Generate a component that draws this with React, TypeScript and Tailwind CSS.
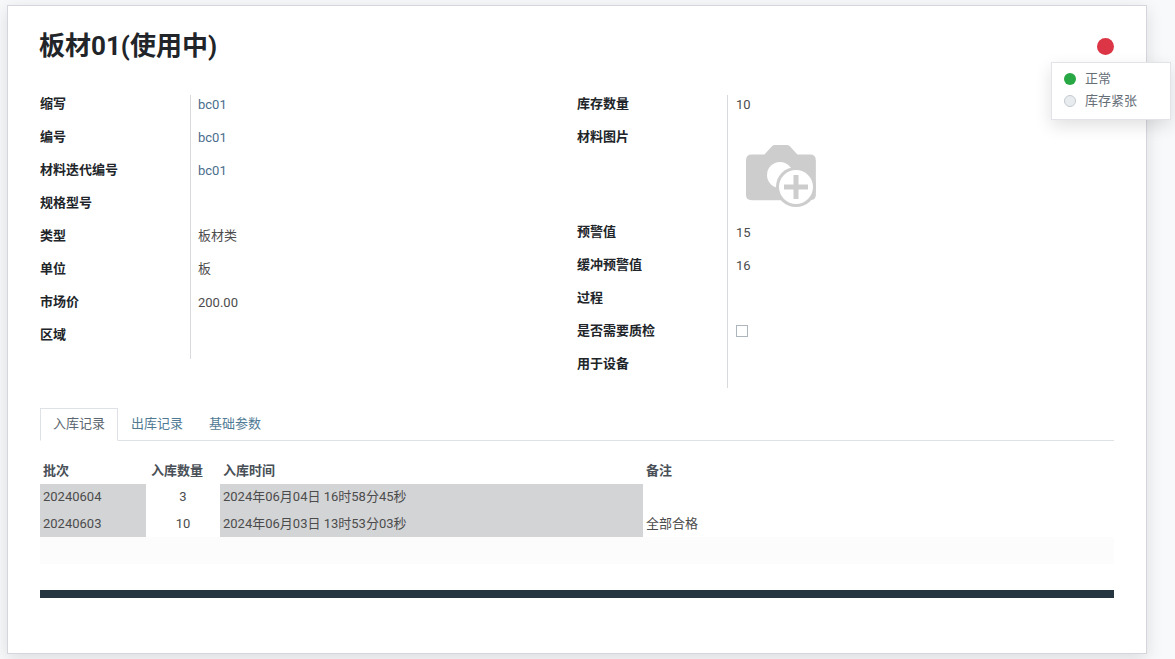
import React from 'react';

const font = { fontFamily: 'Roboto, "Noto Sans CJK SC", sans-serif' };

const leftRows = [
  { label: '缩写', value: 'bc01', cls: 'text-[#4a6d8c]' },
  { label: '编号', value: 'bc01', cls: 'text-[#4a6d8c]' },
  { label: '材料迭代编号', value: 'bc01', cls: 'text-[#4a6d8c]' },
  { label: '规格型号', value: '', cls: '' },
  { label: '类型', value: '板材类', cls: 'block -mt-px' },
  { label: '单位', value: '板', cls: 'block -mt-px' },
  { label: '市场价', value: '200.00', cls: '' },
  { label: '区域', value: '', cls: '' },
];

const records = [
  { batch: '20240604', qty: '3', time: '2024年06月04日 16时58分45秒', note: '', rowCls: 'h-[26px]' },
  { batch: '20240603', qty: '10', time: '2024年06月03日 13时53分03秒', note: '全部合格', rowCls: 'h-[27px]' },
];

const Row: React.FC<{ label: string; children?: React.ReactNode; className?: string; valueClass?: string }> = ({
  label,
  children,
  className,
  valueClass,
}) => (
  <div className={`flex ${className ?? 'h-[33px]'}`}>
    <div className="w-[150px] shrink-0 font-bold leading-[18px] text-[#212529]">{label}</div>
    <div className={`flex-1 border-l border-[#d8dadd] pt-[1px] leading-[18px] text-[#4c4c4c] ${valueClass ?? 'pl-2'}`}>{children}</div>
  </div>
);

const CameraIcon = () => (
  <svg width="72" height="64" viewBox="0 0 72 64">
    <path
      d="M6 13h13l8-9q1-1 3-1h12q2 0 3 1l8 9h13q6 0 6 6v36q0 5-6 5H6q-6 0-6-5V19q0-6 6-6z"
      fill="#cdcdcd"
      transform="translate(1 -1) scale(0.97)"
    />
    <circle cx="35" cy="32" r="13" fill="#fff" />
    <circle cx="51" cy="44" r="20" fill="#cdcdcd" />
    <circle cx="51" cy="44" r="17" fill="#fff" />
    <path d="M48.5 32h5v9.5H63v5h-9.5V56h-5v-9.5H39v-5h9.5z" fill="#cdcdcd" />
  </svg>
);

export default function App() {
  return (
    <div className="relative h-[659px] w-[1175px] overflow-hidden bg-[#f8f9fb] pl-[7px] pt-[5px] text-[13px]" style={font}>
      <div className="h-[649px] w-[1140px] border border-[#d5d6dd] bg-white px-[32px] pt-[21px] shadow-[0_4px_16px_rgba(0,0,0,0.12)]">
        <div className="flex h-[68px] items-start justify-between">
          <h1 className="ml-[-1px] text-[26px] font-bold leading-[38px] text-[#212529]">板材01(使用中)</h1>
          <span className="mt-[11px] h-[17px] w-[17px] rounded-full bg-[#dc3545]" />
        </div>

        <div className="flex">
          <div className="w-[537px] shrink-0 self-start">
            {leftRows.map((r) => (
              <Row key={r.label} label={r.label} valueClass="pl-[7px]">
                <span className={r.cls}>{r.value}</span>
              </Row>
            ))}
          </div>
          <div className="w-[537px] shrink-0">
            <Row label="库存数量">10</Row>
            <Row label="材料图片" className="h-[95px]">
              <div className="ml-[9px] mt-[14px]"><CameraIcon /></div>
            </Row>
            <Row label="预警值">15</Row>
            <Row label="缓冲预警值">16</Row>
            <Row label="过程" />
            <Row label="是否需要质检">
              <div className="mt-[2px] h-3 w-3 border border-[#adb5bd] bg-white" />
            </Row>
            <Row label="用于设备" />
          </div>
        </div>

        <div className="mt-[20px] flex h-[33px] border-b border-[#dee2e6]">
          <div className="h-[33px] w-[78px] border border-[#dee2e6] border-b-white bg-white text-center leading-[30px] text-[#5c6670]">入库记录</div>
          <div className="ml-[13px] leading-[32px] text-[#4f7a94]">出库记录</div>
          <div className="ml-[26px] leading-[32px] text-[#4f7a94]">基础参数</div>
        </div>

        <table className="mt-[16px] w-[1074px] table-fixed border-collapse text-[#4c4c4c]">
          <thead>
            <tr className="h-[27px] text-left font-bold text-[#495057]">
              <th className="w-[106px] pl-[3px]">批次</th>
              <th className="w-[74px] pl-[5px]">入库数量</th>
              <th className="w-[423px] pl-[3px]">入库时间</th>
              <th className="pl-[3px]">备注</th>
            </tr>
          </thead>
          <tbody>
            {records.map((r) => (
              <tr key={r.batch} className={r.rowCls}>
                <td className="bg-[#d3d4d6] pl-[3px]">{r.batch}</td>
                <td className="text-center">{r.qty}</td>
                <td className="bg-[#d3d4d6] pl-[3px]">{r.time}</td>
                <td className="pl-[3px]">{r.note}</td>
              </tr>
            ))}
            <tr className="h-[27px] bg-[#fcfcfc]">
              <td colSpan={4} />
            </tr>
          </tbody>
        </table>

        <div className="mt-[26px] h-2 bg-[#263640]" />
      </div>

      <div className="absolute left-[1051px] top-[62px] h-[58px] w-[120px] border border-[#e2e3e8] bg-white pl-3 pt-[5px] text-[#666e78] shadow-[0_6px_16px_rgba(0,0,0,0.12)]">
        <div className="flex h-[22px] items-center gap-[9px]">
          <span className="h-3 w-3 rounded-full bg-[#28a745]" />
          <span>正常</span>
        </div>
        <div className="flex h-[22px] items-center gap-[9px]">
          <span className="h-3 w-3 rounded-full border border-[#c4c9cf] bg-[#e9ecef]" />
          <span>库存紧张</span>
        </div>
      </div>
    </div>
  );
}
